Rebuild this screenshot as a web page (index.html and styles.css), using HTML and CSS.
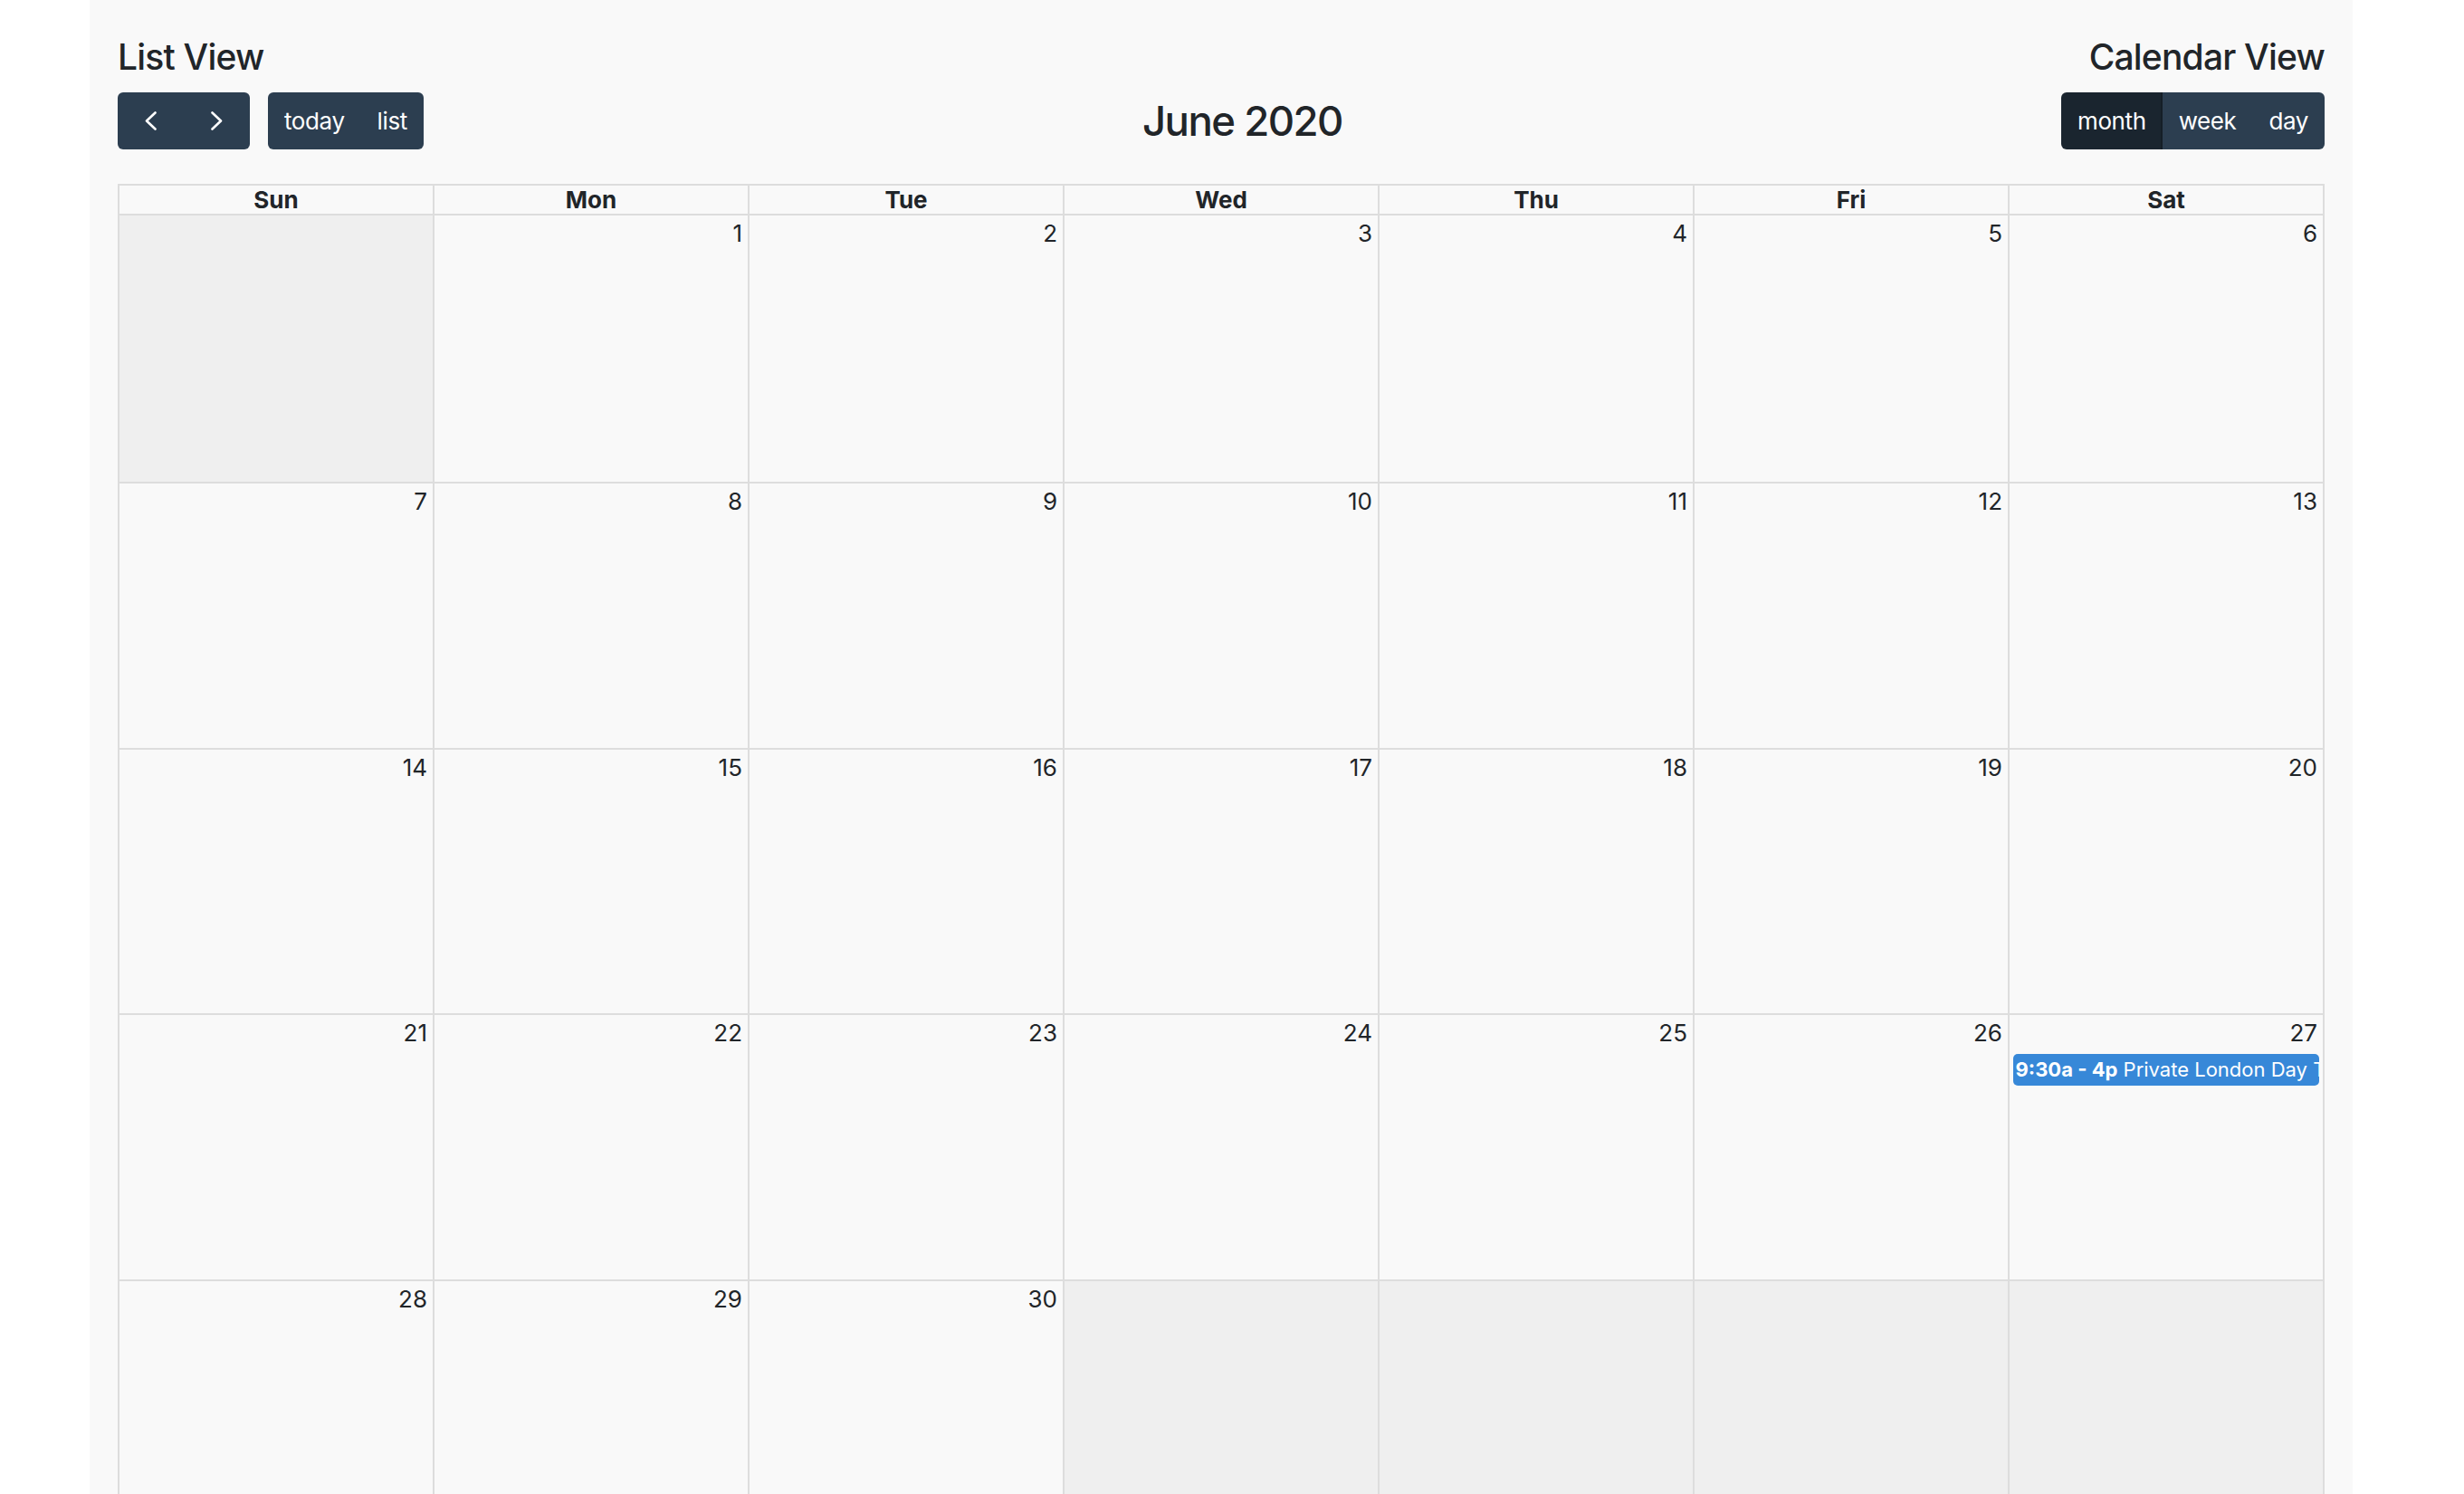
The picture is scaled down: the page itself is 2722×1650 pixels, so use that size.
FILE: index.html
```html
<!DOCTYPE html>
<html lang="en">
<head>
  <meta charset="UTF-8" />
  <meta name="viewport" content="width=device-width, initial-scale=1.0"/>
  <title>Calendar</title>
  <link rel="stylesheet" href="styles.css">
</head>
<body>
  <div class="container">
    <div class="heads">
      <h4>List View</h4>
      <h4>Calendar View</h4>
    </div>

    <div class="toolbar">
      <div class="chunk">
        <div class="btn-group">
          <button class="btn icon" aria-label="prev">
            <svg width="13" height="21" viewBox="0 0 13 21"><polyline points="11.5,1.5 2,10.5 11.5,19.5" fill="none" stroke="#fff" stroke-width="2.6" stroke-linecap="round" stroke-linejoin="round"/></svg>
          </button>
          <button class="btn icon" aria-label="next">
            <svg width="13" height="21" viewBox="0 0 13 21"><polyline points="1.5,1.5 11,10.5 1.5,19.5" fill="none" stroke="#fff" stroke-width="2.6" stroke-linecap="round" stroke-linejoin="round"/></svg>
          </button>
        </div>
        <div class="btn-group">
          <button class="btn">today</button>
          <button class="btn">list</button>
        </div>
      </div>
      <h2 class="title">June 2020</h2>
      <div class="chunk">
        <div class="btn-group">
          <button class="btn active">month</button>
          <button class="btn">week</button>
          <button class="btn">day</button>
        </div>
      </div>
    </div>

    <div class="cal">
      <div class="dow">Sun</div>
      <div class="dow">Mon</div>
      <div class="dow">Tue</div>
      <div class="dow">Wed</div>
      <div class="dow">Thu</div>
      <div class="dow">Fri</div>
      <div class="dow">Sat</div>

      <!-- week 1 -->
      <div class="day first other"></div>
      <div class="day first"><div class="num">1</div></div>
      <div class="day first"><div class="num">2</div></div>
      <div class="day first"><div class="num">3</div></div>
      <div class="day first"><div class="num">4</div></div>
      <div class="day first"><div class="num">5</div></div>
      <div class="day first"><div class="num">6</div></div>

      <!-- week 2 -->
      <div class="day"><div class="num">7</div></div>
      <div class="day"><div class="num">8</div></div>
      <div class="day"><div class="num">9</div></div>
      <div class="day"><div class="num">10</div></div>
      <div class="day"><div class="num">11</div></div>
      <div class="day"><div class="num">12</div></div>
      <div class="day"><div class="num">13</div></div>

      <!-- week 3 -->
      <div class="day"><div class="num">14</div></div>
      <div class="day"><div class="num">15</div></div>
      <div class="day"><div class="num">16</div></div>
      <div class="day"><div class="num">17</div></div>
      <div class="day"><div class="num">18</div></div>
      <div class="day"><div class="num">19</div></div>
      <div class="day"><div class="num">20</div></div>

      <!-- week 4 -->
      <div class="day"><div class="num">21</div></div>
      <div class="day"><div class="num">22</div></div>
      <div class="day"><div class="num">23</div></div>
      <div class="day"><div class="num">24</div></div>
      <div class="day"><div class="num">25</div></div>
      <div class="day"><div class="num">26</div></div>
      <div class="day">
        <div class="num">27</div>
        <div class="event"><b>9:30a - 4p</b> Private London Day Tour</div>
      </div>

      <!-- week 5 -->
      <div class="day"><div class="num">28</div></div>
      <div class="day"><div class="num">29</div></div>
      <div class="day"><div class="num">30</div></div>
      <div class="day other"></div>
      <div class="day other"></div>
      <div class="day other"></div>
      <div class="day other"></div>
    </div>
  </div>
</body>
</html>
```

FILE: styles.css
```css
body {
  margin: 0;
  background: #fff;
  color: #212529;
  font-family: Inter, "Noto Sans", sans-serif;
}
.container {
  margin-left: 99px;
  width: 2500px;
  min-height: 100vh;
  box-sizing: border-box;
  padding: 39px 31px 0;
  background: #f9f9f9;
}
.heads {
  display: flex;
  justify-content: space-between;
  margin-bottom: 16px;
}
.heads h4 {
  margin: 0;
  font-size: 39px;
  font-weight: 500;
  line-height: 47px;
  letter-spacing: -0.8px;
}
.toolbar {
  display: flex;
  justify-content: space-between;
  align-items: center;
  height: 63px;
  margin-bottom: 38px;
}
.chunk {
  display: flex;
  gap: 20px;
}
.btn-group {
  display: flex;
}
.btn {
  height: 63px;
  padding: 0 18px;
  border: none;
  background: #2c3e50;
  color: #fff;
  font-family: inherit;
  font-size: 26px;
  line-height: 63px;
  letter-spacing: -0.4px;
  display: flex;
  align-items: center;
  cursor: pointer;
}
.btn.icon {
  padding: 0 30px;
}
.btn-group .btn:first-child {
  border-radius: 6px 0 0 6px;
}
.btn-group .btn:last-child {
  border-radius: 0 6px 6px 0;
}
.btn.active {
  background: #1a252f;
  box-shadow: inset -2px 0 0 #151e27;
}
.title {
  margin: 0;
  font-size: 45.5px;
  font-weight: 500;
  line-height: 55px;
  letter-spacing: -1.5px;
}
.cal {
  display: grid;
  grid-template-columns: repeat(7, 1fr);
  border-top: 2px solid #ddd;
  border-left: 2px solid #ddd;
}
.cal > div {
  border-right: 2px solid #ddd;
  border-bottom: 2px solid #ddd;
  min-width: 0;
}
.dow {
  text-align: center;
  font-size: 26px;
  font-weight: 700;
  line-height: 31px;
}
.day {
  height: 291.5px;
}
.day.first {
  height: 294px;
}
.day.other {
  background: #efefef;
}
.num {
  padding: 4px 6px 0;
  text-align: right;
  font-size: 26px;
}
.event {
  margin: 7.5px 4px 0 3.5px;
  padding: 2px 3px;
  background: #3788d8;
  border-radius: 5px;
  color: #fff;
  font-size: 22px;
  line-height: 31px;
  white-space: nowrap;
  overflow: hidden;
}
```
